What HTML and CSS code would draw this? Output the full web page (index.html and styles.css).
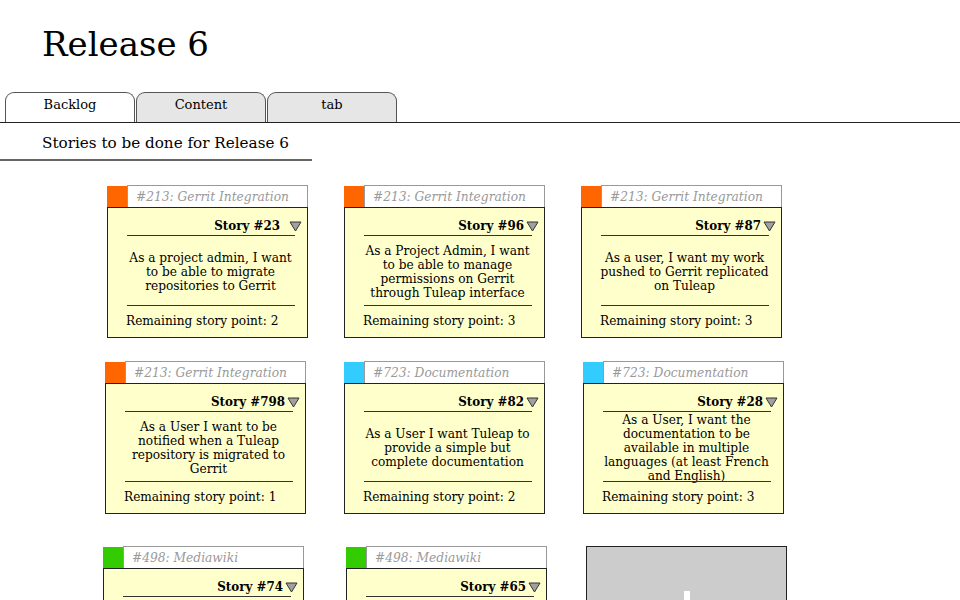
FILE: index.html
```html
<!DOCTYPE html>
<html>
<head>
<meta charset="utf-8">
<link rel="stylesheet" href="styles.css">
</head>
<body>
<h1 class="title">Release 6</h1>
<div class="tabs">
  <div class="tab tab-active">Backlog</div>
  <div class="tab">Content</div>
  <div class="tab">tab</div>
</div>
<div class="subhead">Stories to be done for Release 6</div>

<div class="board">
  <div class="card">
    <div class="card-head"><span class="swatch orange"></span><span class="epic">#213: Gerrit Integration</span></div>
    <div class="card-body">
      <div class="story-title wide">Story #23<svg class="tri" width="13" height="11" viewBox="0 0 13 11"><polygon points="1,1 12,1 6.5,10" fill="#a0a0a0" stroke="#333" stroke-width="1"/></svg></div>
      <div class="rule"></div>
      <div class="desc">As a project admin, I want to be able to migrate repositories to Gerrit</div>
      <div class="rule"></div>
      <div class="remaining">Remaining story point: 2</div>
    </div>
  </div>
  <div class="card">
    <div class="card-head"><span class="swatch orange"></span><span class="epic">#213: Gerrit Integration</span></div>
    <div class="card-body">
      <div class="story-title">Story #96<svg class="tri" width="13" height="11" viewBox="0 0 13 11"><polygon points="1,1 12,1 6.5,10" fill="#a0a0a0" stroke="#333" stroke-width="1"/></svg></div>
      <div class="rule"></div>
      <div class="desc">As a Project Admin, I want to be able to manage permissions on Gerrit through Tuleap interface</div>
      <div class="rule"></div>
      <div class="remaining">Remaining story point: 3</div>
    </div>
  </div>
  <div class="card">
    <div class="card-head"><span class="swatch orange"></span><span class="epic">#213: Gerrit Integration</span></div>
    <div class="card-body">
      <div class="story-title">Story #87<svg class="tri" width="13" height="11" viewBox="0 0 13 11"><polygon points="1,1 12,1 6.5,10" fill="#a0a0a0" stroke="#333" stroke-width="1"/></svg></div>
      <div class="rule"></div>
      <div class="desc">As a user, I want my work pushed to Gerrit replicated on Tuleap</div>
      <div class="rule"></div>
      <div class="remaining">Remaining story point: 3</div>
    </div>
  </div>

  <div class="card nudge-left">
    <div class="card-head"><span class="swatch orange"></span><span class="epic">#213: Gerrit Integration</span></div>
    <div class="card-body">
      <div class="story-title">Story #798<svg class="tri" width="13" height="11" viewBox="0 0 13 11"><polygon points="1,1 12,1 6.5,10" fill="#a0a0a0" stroke="#333" stroke-width="1"/></svg></div>
      <div class="rule"></div>
      <div class="desc">As a User I want to be notified when a Tuleap repository is migrated to Gerrit</div>
      <div class="rule"></div>
      <div class="remaining">Remaining story point: 1</div>
    </div>
  </div>
  <div class="card">
    <div class="card-head"><span class="swatch blue"></span><span class="epic">#723: Documentation</span></div>
    <div class="card-body">
      <div class="story-title">Story #82<svg class="tri" width="13" height="11" viewBox="0 0 13 11"><polygon points="1,1 12,1 6.5,10" fill="#a0a0a0" stroke="#333" stroke-width="1"/></svg></div>
      <div class="rule"></div>
      <div class="desc">As a User I want Tuleap to provide a simple but complete documentation</div>
      <div class="rule"></div>
      <div class="remaining">Remaining story point: 2</div>
    </div>
  </div>
  <div class="card nudge-right">
    <div class="card-head"><span class="swatch blue"></span><span class="epic">#723: Documentation</span></div>
    <div class="card-body">
      <div class="story-title">Story #28<svg class="tri" width="13" height="11" viewBox="0 0 13 11"><polygon points="1,1 12,1 6.5,10" fill="#a0a0a0" stroke="#333" stroke-width="1"/></svg></div>
      <div class="rule"></div>
      <div class="desc">As a User, I want the documentation to be available in multiple languages (at least French and English)</div>
      <div class="rule"></div>
      <div class="remaining">Remaining story point: 3</div>
    </div>
  </div>

  <div class="card row3 nudge-left2">
    <div class="card-head"><span class="swatch green"></span><span class="epic">#498: Mediawiki</span></div>
    <div class="card-body">
      <div class="story-title">Story #74<svg class="tri" width="13" height="11" viewBox="0 0 13 11"><polygon points="1,1 12,1 6.5,10" fill="#a0a0a0" stroke="#333" stroke-width="1"/></svg></div>
      <div class="rule"></div>
      <div class="desc">As a user I want to use Mediawiki</div>
      <div class="rule"></div>
      <div class="remaining">Remaining story point: 2</div>
    </div>
  </div>
  <div class="card row3 nudge-right">
    <div class="card-head"><span class="swatch green"></span><span class="epic">#498: Mediawiki</span></div>
    <div class="card-body">
      <div class="story-title">Story #65<svg class="tri" width="13" height="11" viewBox="0 0 13 11"><polygon points="1,1 12,1 6.5,10" fill="#a0a0a0" stroke="#333" stroke-width="1"/></svg></div>
      <div class="rule"></div>
      <div class="desc">As a user I want Mediawiki pages</div>
      <div class="rule"></div>
      <div class="remaining">Remaining story point: 1</div>
    </div>
  </div>
  <div class="add-card row3 nudge-right2"><span class="plus"></span></div>
</div>
</body>
</html>
```
FILE: styles.css
```css
html, body {
  margin: 0;
  padding: 0;
  background: #fff;
}
body {
  font-family: "DejaVu Serif", serif;
  color: #000;
  width: 960px;
  height: 600px;
  overflow: hidden;
}
.title {
  margin: 24px 0 0 42px;
  font-size: 34px;
  line-height: 40px;
  font-weight: normal;
}
.tabs {
  display: flex;
  margin-top: 27px;
  padding-left: 5px;
  border-bottom: 1px solid #222;
  height: 31px;
  align-items: flex-end;
}
.tab {
  width: 130px;
  height: 30px;
  box-sizing: border-box;
  border: 1px solid #555;
  border-bottom: none;
  border-radius: 9px 9px 0 0;
  background: #e6e6e6;
  font-size: 13px;
  line-height: 23px;
  text-align: center;
  margin-right: 1px;
}
.tab-active {
  background: #fff;
}
.subhead {
  width: 270px;
  padding-left: 42px;
  height: 36px;
  line-height: 40px;
  font-size: 15.2px;
  border-bottom: 2px solid #666;
}
.board {
  display: grid;
  grid-template-columns: repeat(3, 201px);
  column-gap: 36px;
  row-gap: 23px;
  margin: 24px 0 0 107px;
}
.card {
  display: flex;
  flex-direction: column;
  width: 201px;
  font-family: "DejaVu Serif Condensed", "DejaVu Serif", serif;
  font-stretch: condensed;
}
.card-head {
  display: flex;
  height: 22px;
}
.swatch {
  width: 20px;
  height: 21px;
  margin-top: 1px;
}
.orange { background: #ff6600; }
.blue { background: #33ccff; }
.green { background: #33cc00; }
.epic {
  flex: 1;
  box-sizing: border-box;
  border: 1px solid #999;
  border-bottom: none;
  background: #fff;
  color: #999;
  font-style: italic;
  font-size: 13.6px;
  line-height: 21px;
  padding-left: 8px;
  white-space: nowrap;
  overflow: hidden;
}
.card-body {
  background: #ffffcc;
  border: 1px solid #222;
  height: 129px;
  display: flex;
  flex-direction: column;
}
.story-title {
  display: flex;
  justify-content: flex-end;
  align-items: center;
  gap: 2px;
  font-weight: bold;
  font-size: 13.2px;
  line-height: 18px;
  padding: 9px 5px 0 0;
  height: 18px;
  flex: none;
}
.story-title.wide {
  gap: 9px;
}
.tri {
  display: block;
}
.rule {
  height: 1px;
  flex: none;
  background: #333;
  margin: 0 12px 0 19px;
}
.desc {
  height: 69px;
  flex: none;
  display: flex;
  align-items: center;
  justify-content: center;
  text-align: center;
  font-size: 13.5px;
  line-height: 14px;
  padding: 0 12px 0 18px;
}
.remaining {
  font-size: 13.5px;
  line-height: 16px;
  padding: 6px 0 0 18px;
}
.row3 {
  margin-top: 9px;
}
.nudge-left { margin-left: -2px; }
.nudge-left2 { margin-left: -4px; }
.nudge-right { margin-left: 2px; }
.nudge-right2 { margin-left: 5px; }
.add-card {
  width: 201px;
  height: 153px;
  box-sizing: border-box;
  background: #cccccc;
  border: 1px solid #222;
  display: flex;
  align-items: center;
  justify-content: center;
}
.plus {
  width: 6px;
  height: 64px;
  background: #fff;
}
```
